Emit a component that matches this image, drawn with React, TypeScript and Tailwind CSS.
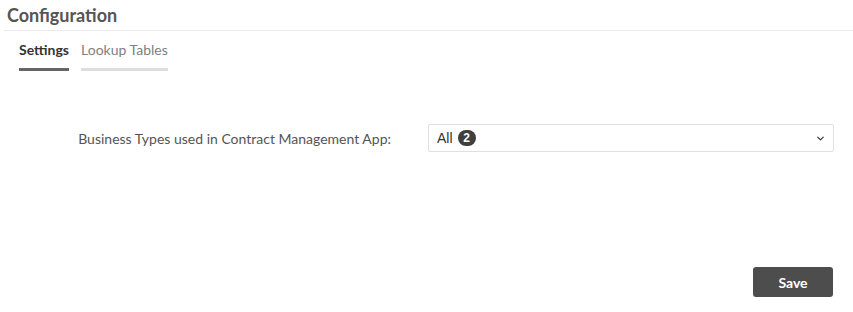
import { ChevronDown } from 'lucide-react'

export default function App() {
  return (
    <div className="w-[853px] h-[312px] bg-white font-['Lato',sans-serif] text-[#555] flex flex-col">
      {/* Header */}
      <div className="pl-1">
        <h1 className="pl-[3px] pt-[4px] h-[30px] text-[18px] font-bold text-[#555] leading-[22px]">
          Configuration
        </h1>
        <div className="h-px bg-[#ebebeb]" />
      </div>

      {/* Tabs */}
      <div className="flex gap-3 pl-[19px] pt-[10px]">
        <div className="flex flex-col">
          <span className="text-[14px] font-bold text-[#333] leading-[18px]">Settings</span>
          <span className="mt-[9px] h-[3px] bg-[#666]" />
        </div>
        <div className="flex flex-col">
          <span className="text-[14px] text-[#808080] leading-[18px]">Lookup Tables</span>
          <span className="mt-[9px] h-[3px] bg-[#ddd]" />
        </div>
      </div>

      {/* Form row */}
      <div className="flex items-center mt-[53px]">
        <label className="w-[391px] text-right text-[14px] text-[#555]">
          Business Types used in Contract Management App:
        </label>
        <div className="ml-[37px] w-[406px] h-[28px] border border-[#e0e0e0] rounded-[2px] flex items-center pl-2 pr-[7px] font-['Liberation_Sans',Arial,sans-serif]">
          <span className="text-[14px] text-[#333]">All</span>
          <span className="ml-[5px] w-[18px] h-[16px] rounded-full bg-[#3f3f3f] text-white text-[12px] font-bold flex items-center justify-center">
            2
          </span>
          <ChevronDown className="ml-auto w-[11px] h-[11px] text-[#333]" strokeWidth={2.5} />
        </div>
      </div>

      {/* Footer */}
      <div className="mt-auto flex justify-end pr-5 pb-[15px]">
        <button className="w-[80px] h-[30px] rounded-[3px] bg-[#4d4d4d] text-white text-[14px] font-bold">
          Save
        </button>
      </div>
    </div>
  )
}
